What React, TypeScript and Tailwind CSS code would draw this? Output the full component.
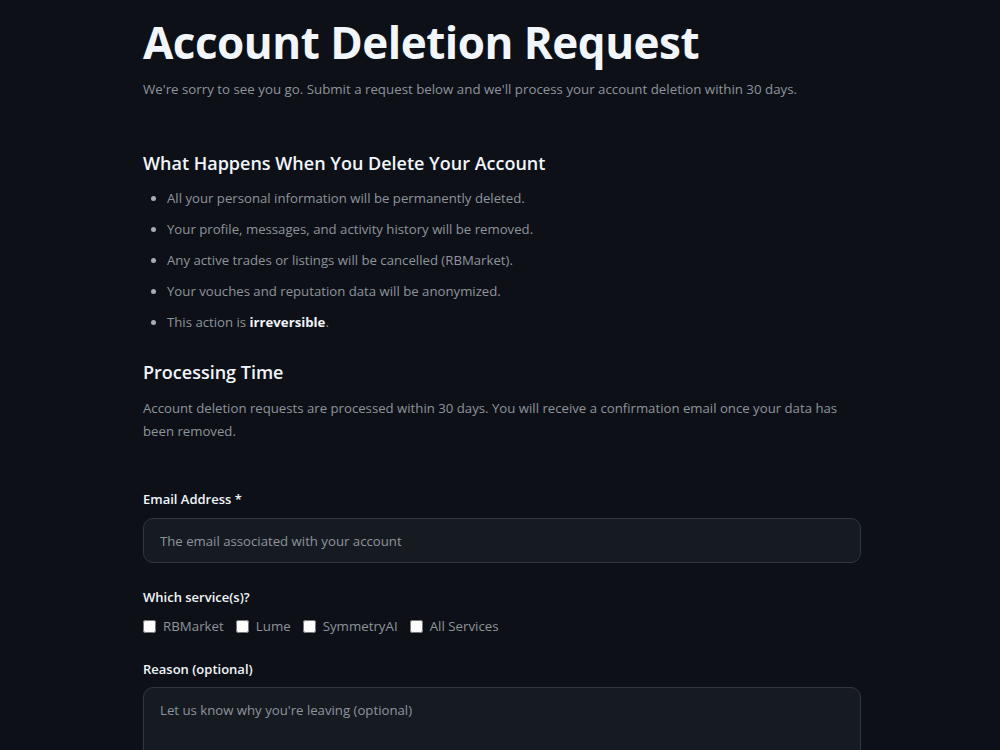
const services = ["RBMarket", "Lume", "SymmetryAI", "All Services"];

const bullets = [
  "All your personal information will be permanently deleted.",
  "Your profile, messages, and activity history will be removed.",
  "Any active trades or listings will be cancelled (RBMarket).",
  "Your vouches and reputation data will be anonymized.",
];

export default function App() {
  return (
    <div
      className="min-h-[750px] bg-[#0d1117] text-[#c9d1d9]"
      style={{ fontFamily: '"Open Sans", "Noto Sans", sans-serif' }}
    >
      <div className="mx-auto w-[722px] pl-1 pt-[14px]">
        <h1 className="text-[44px] font-bold leading-[56px] tracking-[-0.5px] text-[#f0f6fc]">
          Account Deletion Request
        </h1>
        <p className="mt-[8px] text-[13.3px] leading-[22px] text-[#8e949c]">
          We're sorry to see you go. Submit a request below and we'll process your account deletion within 30 days.
        </p>

        <h2 className="mt-[49px] text-[18px] font-semibold leading-[28px] text-[#f0f6fc]">
          What Happens When You Delete Your Account
        </h2>
        <ul className="mt-[10px] flex flex-col gap-[9px] pl-[24px] text-[13.2px] leading-[22px] text-[#8e949c] list-disc marker:text-[#a8adb4]">
          {bullets.map((b) => (
            <li key={b}>{b}</li>
          ))}
          <li>
            This action is <strong className="font-bold text-[#f0f6fc]">irreversible</strong>.
          </li>
        </ul>

        <h2 className="mt-[25px] text-[18px] font-semibold leading-[28px] text-[#f0f6fc]">
          Processing Time
        </h2>
        <p className="mt-[11px] text-[13.2px] leading-[23px] text-[#8e949c]">
          Account deletion requests are processed within 30 days. You will receive a confirmation email once your data has been removed.
        </p>

        <form className="mt-[46px] flex flex-col">
          <label className="text-[13px] font-semibold leading-[20px] text-[#f0f6fc]">
            Email Address *
          </label>
          <input
            type="email"
            placeholder="The email associated with your account"
            className="mt-[9px] h-[45px] w-full rounded-[10px] border border-[#30363d] bg-[#161b22] px-4 text-[13.2px] text-[#c9d1d9] outline-none placeholder:text-[#8e949c]"
          />

          <label className="mt-[24px] text-[13px] font-semibold leading-[20px] text-[#f0f6fc]">
            Which service(s)?
          </label>
          <div className="mt-[9px] flex items-center gap-[12px] text-[13.3px] leading-[20px] text-[#8e949c]">
            {services.map((s) => (
              <label key={s} className="flex items-center gap-[7px]">
                <input type="checkbox" className="h-[13px] w-[13px] m-0" />
                <span>{s}</span>
              </label>
            ))}
          </div>

          <label className="mt-[23px] text-[13px] font-semibold leading-[20px] text-[#f0f6fc]">
            Reason (optional)
          </label>
          <textarea
            placeholder="Let us know why you're leaving (optional)"
            rows={4}
            className="mt-[8px] h-[110px] w-full resize-none rounded-[10px] border border-[#30363d] bg-[#161b22] px-4 py-[13px] text-[13.2px] text-[#c9d1d9] outline-none placeholder:text-[#8e949c]"
          />
        </form>
      </div>
    </div>
  );
}
